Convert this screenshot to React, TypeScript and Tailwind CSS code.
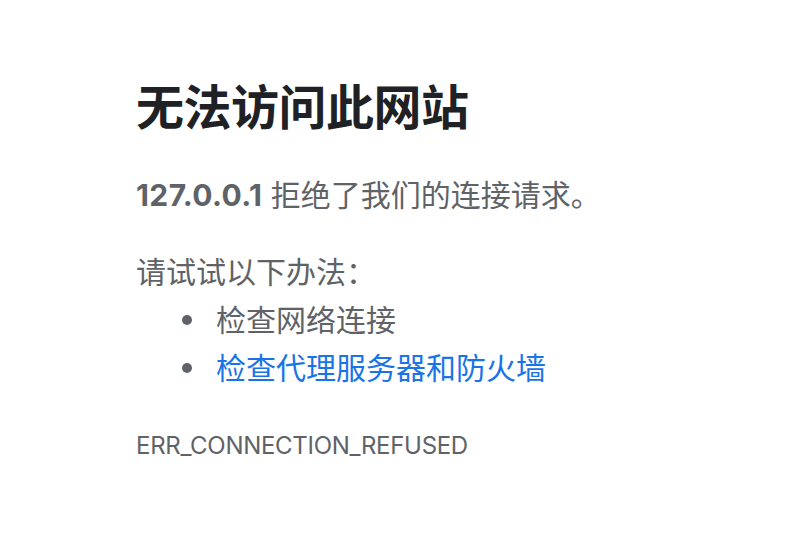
import React from "react";

export default function App() {
  const font = { fontFamily: 'Inter, "Noto Sans CJK SC", sans-serif' };
  return (
    <div className="w-[806px] h-[536px] bg-white overflow-hidden" style={font}>
      <div className="pl-[136px] pt-[78px] flex flex-col">
        <h1 className="text-[48px] leading-[60px] font-semibold text-[#202124] tracking-[-0.5px]">
          无法访问此网站
        </h1>
        <p className="mt-[33px] text-[30px] leading-[48px] text-[#5f6368]">
          <span className="font-bold tracking-[0.4px]">127.0.0.1</span>{" "}
          <span>拒绝了我们的连接请求。</span>
        </p>
        <p className="mt-[29px] text-[30px] leading-[48px] text-[#5f6368]">
          请试试以下办法：
        </p>
        <ul className="flex flex-col text-[30px] leading-[48px]">
          <li className="flex items-center">
            <span className="ml-[46px] w-[10px] h-[10px] rounded-full bg-[#5f6368]" />
            <span className="ml-[24px] text-[#5f6368]">检查网络连接</span>
          </li>
          <li className="flex items-center">
            <span className="ml-[46px] w-[10px] h-[10px] rounded-full bg-[#5f6368]" />
            <span className="ml-[24px] text-[#1a73e8]">检查代理服务器和防火墙</span>
          </li>
        </ul>
        <div className="mt-[39px] text-[24px] leading-[30px] text-[#5f6368] uppercase tracking-[-0.3px]">
          ERR_CONNECTION_REFUSED
        </div>
      </div>
    </div>
  );
}
